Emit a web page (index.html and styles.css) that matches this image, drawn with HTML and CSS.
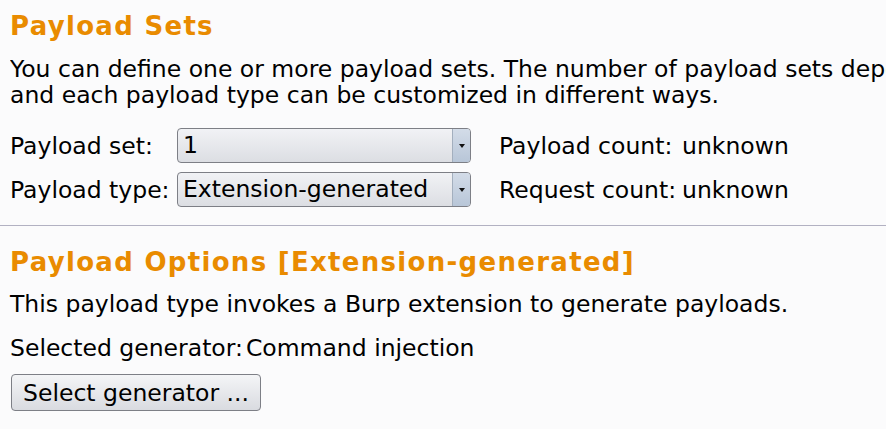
FILE: index.html
```html
<!DOCTYPE html>
<html>
<head>
<meta charset="utf-8">
<link rel="stylesheet" href="styles.css">
</head>
<body>
<section class="sets">
  <h1 class="title">Payload Sets</h1>
  <p class="desc">You can define one or more payload sets. The number of payload sets depends on the attack type defined in the Positions tab. Various payload types are available for each payload set,<br>and each payload type can be customized in different ways.</p>
  <div class="form">
    <span class="label">Payload set:</span>
    <div class="combo"><span class="combo-text">1</span><span class="combo-btn"><span class="tri"></span></span></div>
    <span class="info"><span class="info-key">Payload count:</span><span class="info-val">unknown</span></span>
    <span class="label">Payload type:</span>
    <div class="combo"><span class="combo-text">Extension-generated</span><span class="combo-btn"><span class="tri"></span></span></div>
    <span class="info"><span class="info-key">Request count:</span><span class="info-val">unknown</span></span>
  </div>
</section>
<hr class="sep">
<section class="options">
  <h1 class="title">Payload Options [Extension-generated]</h1>
  <p class="line">This payload type invokes a Burp extension to generate payloads.</p>
  <p class="line gen"><span class="gen-key">Selected generator:</span><span class="gen-val">Command injection</span></p>
  <button class="btn">Select generator ...</button>
</section>
</body>
</html>
```
FILE: styles.css
```css
html, body {
  margin: 0;
  padding: 0;
  background: #fbfbfc;
  overflow: hidden;
  width: 886px;
  height: 429px;
}
body {
  font-family: "DejaVu Sans", sans-serif;
  font-size: 23.5px;
  color: #000;
}
.sets, .options {
  padding-left: 10px;
}
.title {
  margin: 0;
  font-size: 26px;
  font-weight: bold;
  letter-spacing: 1.3px;
  color: #e98b00;
  line-height: 30px;
  white-space: nowrap;
}
.sets .title {
  padding-top: 11px;
}
.desc {
  margin: 15px 0 0 0;
  line-height: 26px;
  white-space: nowrap;
  overflow: hidden;
}
.form {
  display: grid;
  grid-template-columns: 167px 294px auto;
  row-gap: 9px;
  align-items: center;
  margin-top: 20px;
}
.label, .info {
  line-height: 26px;
  white-space: nowrap;
}
.info {
  display: flex;
  padding-left: 28px;
}
.info-key {
  width: 183px;
}
.combo {
  height: 33px;
  border: 1px solid #7d7f86;
  border-radius: 4px;
  display: flex;
  background: linear-gradient(#f1f2f5, #dcdee3);
  overflow: hidden;
}
.combo-text {
  flex: 1;
  padding-left: 5px;
  line-height: 33px;
  white-space: nowrap;
}
.combo-btn {
  width: 17px;
  border-left: 1px solid #a3afbe;
  background: linear-gradient(#d3dce8, #b8c6d8);
  display: flex;
  align-items: center;
  justify-content: center;
}
.tri {
  width: 0;
  height: 0;
  border-left: 3.5px solid transparent;
  border-right: 3.5px solid transparent;
  border-top: 4px solid #111;
}
.sep {
  margin: 18px 0 0 0;
  border: 0;
  border-top: 1px solid #b2b1c2;
  height: 0;
}
.options .title {
  padding-top: 21px;
}
.line {
  margin: 14px 0 0 0;
  line-height: 26px;
  white-space: nowrap;
}
.gen {
  margin-top: 18px;
}
.gen-val {
  margin-left: 3px;
}
.btn {
  display: block;
  margin-top: 13px;
  margin-left: 1px;
  width: 250px;
  height: 37px;
  font-family: "DejaVu Sans", sans-serif;
  font-size: 23.5px;
  color: #000;
  border: 1px solid #7d7f86;
  border-radius: 4px;
  background: linear-gradient(#f4f5f7, #d9dbe0);
  padding: 0;
  text-align: center;
}
```
